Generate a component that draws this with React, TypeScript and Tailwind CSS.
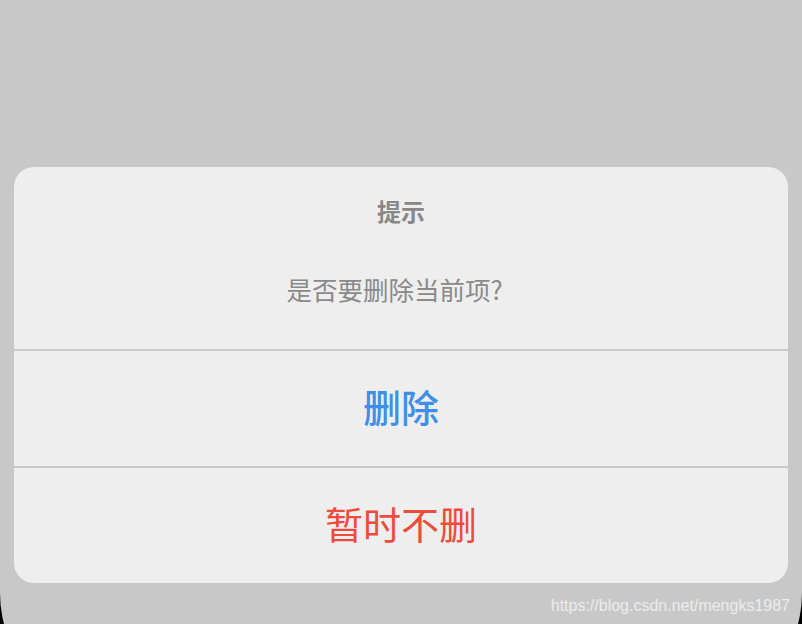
const font = { fontFamily: '"Noto Sans CJK SC", "Noto Sans", sans-serif' };

export default function App() {
  return (
    <div className="relative h-[624px] w-[802px] overflow-hidden bg-black" style={font}>
      {/* 屏幕区域 */}
      <div className="h-[715px] w-full rounded-b-[122px] bg-[#c8c8c8] pt-[167px] px-[14px]">
        <div className="w-[774px] overflow-hidden rounded-[20px] bg-[#eeeeee]">
          {/* 标题 + 内容 */}
          <div className="flex h-[182px] flex-col items-center">
            <div className="mt-[28px] text-[24px] font-bold leading-[32px] text-[#888888]">提示</div>
            <div className="mt-[46px] pr-[13px] text-[25.5px] leading-[32px] text-[#8a8a8a]">是否要删除当前项?</div>
          </div>
          <div className="h-[2px] bg-[#c9c9c9]" />
          <button className="flex h-[115px] w-full items-center justify-center pb-[6px] text-[38px] font-medium text-[#3d8fe8]">
            删除
          </button>
          <div className="h-[2px] bg-[#c9c9c9]" />
          <button className="flex h-[115px] w-full items-center justify-center pb-[6px] text-[38px] text-[#ee4b3a]">
            暂时不删
          </button>
        </div>
      </div>
      <div
        className="absolute right-[12px] top-[594px] text-[16px] text-[#ececec]"
        style={{ fontFamily: '"Liberation Sans", Arial, sans-serif' }}
      >
        https://blog.csdn.net/mengks1987
      </div>
    </div>
  );
}
